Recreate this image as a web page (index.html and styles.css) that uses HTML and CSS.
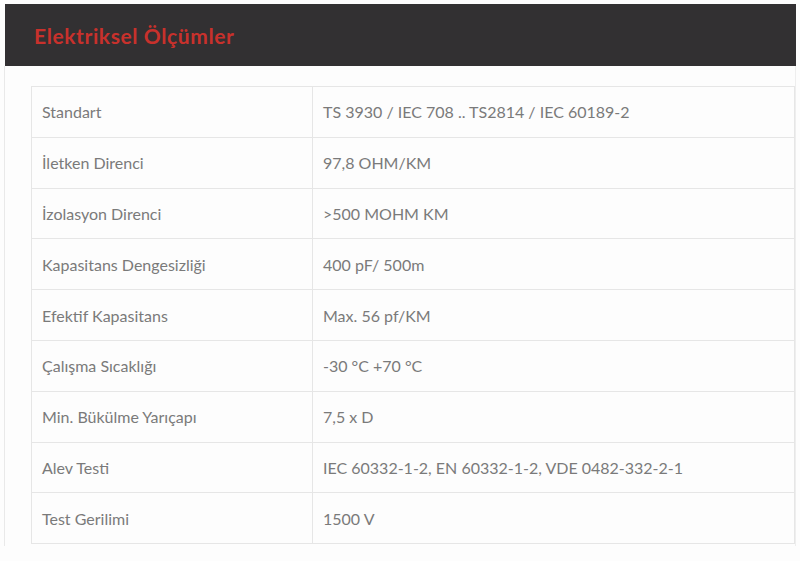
FILE: index.html
```html
<!DOCTYPE html>
<html lang="tr">
<head>
<meta charset="utf-8">
<link rel="stylesheet" href="styles.css">
</head>
<body>
<div class="box">
  <div class="box-head"><h2 class="title">Elektriksel Ölçümler</h2></div>
  <div class="box-body">
    <table class="specs">
      <tr><td class="k">Standart</td><td>TS 3930 / IEC 708 .. TS2814 / IEC 60189-2</td></tr>
      <tr><td class="k">İletken Direnci</td><td>97,8 OHM/KM</td></tr>
      <tr><td class="k">İzolasyon Direnci</td><td>&gt;500 MOHM KM</td></tr>
      <tr><td class="k">Kapasitans Dengesizliği</td><td>400 pF/ 500m</td></tr>
      <tr><td class="k">Efektif Kapasitans</td><td>Max. 56 pf/KM</td></tr>
      <tr><td class="k">Çalışma Sıcaklığı</td><td>-30 °C +70 °C</td></tr>
      <tr><td class="k">Min. Bükülme Yarıçapı</td><td>7,5 x D</td></tr>
      <tr><td class="k">Alev Testi</td><td>IEC 60332-1-2, EN 60332-1-2, VDE 0482-332-2-1</td></tr>
      <tr><td class="k">Test Gerilimi</td><td>1500 V</td></tr>
    </table>
  </div>
</div>
</body>
</html>
```
FILE: styles.css
```css
html, body { margin: 0; padding: 0; background: #fdfdfd; }
body { font-family: Lato, "Open Sans", sans-serif; }
.box { margin: 4px 4px 0 4px; }
.box-head {
  background: #323032;
  height: 62px;
  display: flex;
  align-items: center;
  padding-left: 29px;
  margin-left: 1px;
}
.title {
  margin: 0;
  font-family: Lato, sans-serif;
  font-weight: 700;
  font-size: 21px;
  color: #c8312c;
  letter-spacing: 0.6px;
}
.box-body {
  border-left: 1px solid #e9e9e9;
  border-right: 1px solid #eeeeee;
  padding: 20px 0 2px 26px;
}
.specs {
  width: 100%;
  border-collapse: collapse;
  font-size: 16px;
  color: #7a7a7a;
}
.specs td {
  border: 1px solid #e6e6e6;
  height: 50.8px;
  padding: 0 10px;
  vertical-align: middle;
  box-sizing: border-box;
}
.specs td.k { width: 281px; }
```
